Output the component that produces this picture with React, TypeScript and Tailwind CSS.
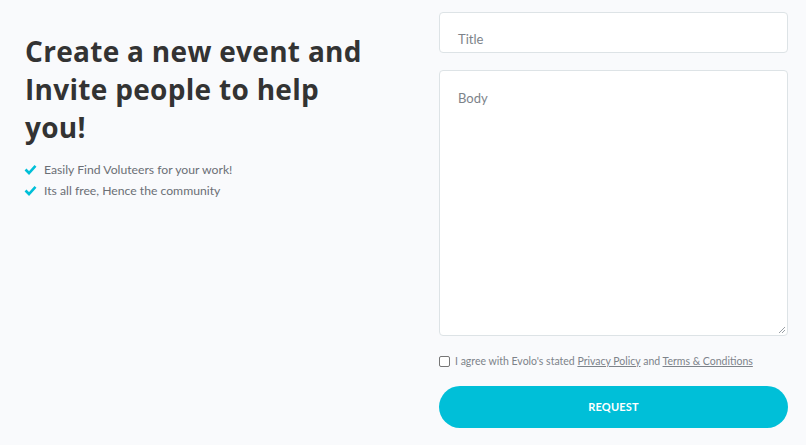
import React from "react";

function Check() {
  return (
    <svg width="13" height="11" viewBox="0 0 13 11" className="shrink-0">
      <path d="M1.5 5.5 L5 9 L11.5 1.8" fill="none" stroke="#00bfd8" strokeWidth="2.6" strokeLinecap="butt" strokeLinejoin="miter" />
    </svg>
  );
}

export default function App() {
  return (
    <div
      className="w-[806px] h-[445px] bg-[#f9fafc] flex overflow-hidden"
      style={{ fontFamily: 'Lato, "Open Sans", "Liberation Sans", sans-serif' }}
    >
      <div className="w-[439px] pl-[24px] pt-[32px]">
        <h2
          className="ml-[1px] text-[28px] leading-[38px] font-bold text-[#333] tracking-[0.3px] w-[360px]"
          style={{ fontFamily: '"Open Sans", "Liberation Sans", sans-serif' }}
        >
          Create a new event and Invite people to help you!
        </h2>
        <ul className="mt-[15px] flex flex-col gap-[4px]">
          <li className="flex items-center gap-[7px] text-[12.2px] leading-[17px] text-[#6b6f75]">
            <Check />
            <span>Easily Find Voluteers for your work!</span>
          </li>
          <li className="flex items-center gap-[7px] text-[12.2px] leading-[17px] text-[#6b6f75]">
            <Check />
            <span>Its all free, Hence the community</span>
          </li>
        </ul>
      </div>
      <div className="w-[349px] pt-[12px] flex flex-col">
        <div className="h-[41px] bg-white border border-[#dde3e6] rounded-[4px] pl-[18px] pt-[18px] text-[13px] leading-[17px] text-[#7d838a]">
          Title
        </div>
        <div className="mt-[17px] h-[266px] bg-white border border-[#dde3e6] rounded-[4px] pl-[18px] pt-[19px] text-[13px] leading-[17px] text-[#7d838a] relative">
          Body
          <svg width="8" height="8" viewBox="0 0 8 8" className="absolute right-[1px] bottom-[1px]">
            <path d="M7 1 L1 7 M7 4 L4 7" stroke="#9aa0a6" strokeWidth="1" />
          </svg>
        </div>
        <div className="mt-[18px] flex items-center gap-[5px] text-[10.5px] leading-[14px] text-[#7d838a]">
          <span className="w-[11px] h-[11px] border border-[#767676] rounded-[2px] bg-white shrink-0" />
          <span>
            I agree with Evolo's stated <span className="underline">Privacy Policy</span> and{" "}
            <span className="underline">Terms &amp; Conditions</span>
          </span>
        </div>
        <button className="mt-[18px] h-[42px] w-full rounded-full bg-[#00bfd8] text-white text-[11px] font-bold tracking-[0.2px]">
          REQUEST
        </button>
      </div>
    </div>
  );
}
